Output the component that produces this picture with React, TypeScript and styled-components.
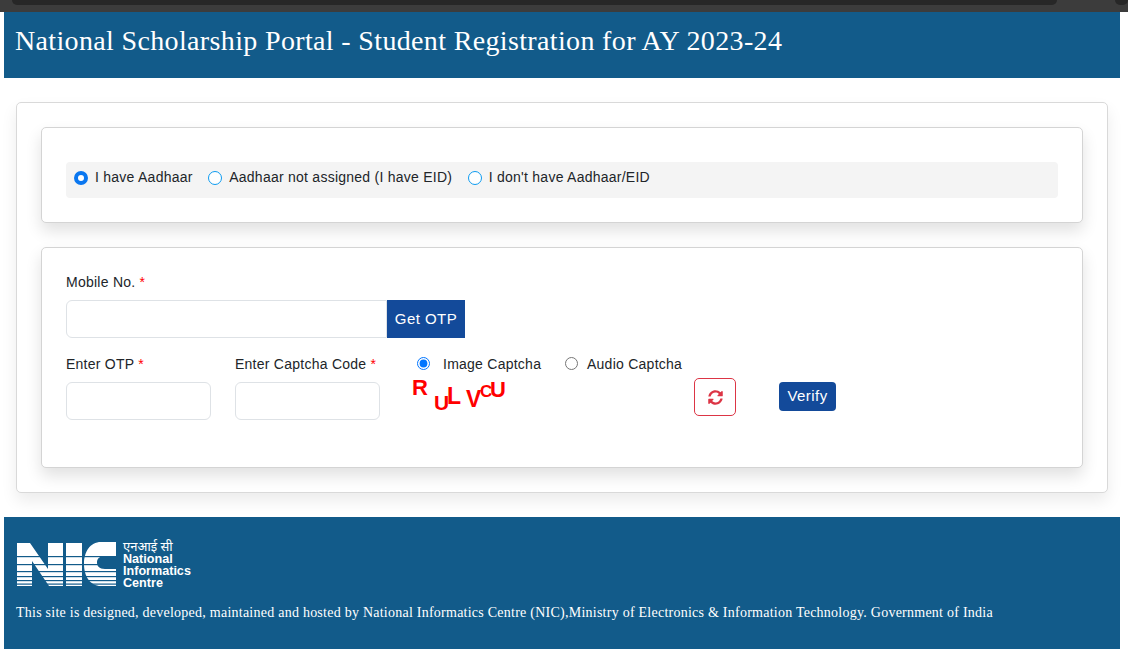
import { createGlobalStyle, styled } from "styled-components";
import { FaSyncAlt } from "react-icons/fa";

const GlobalStyle = createGlobalStyle`
  html, body {
    margin: 0;
    padding: 0;
    background: #fff;
  }
  body {
    font-family: "Liberation Sans", Arial, sans-serif;
    color: #212529;
    overflow: hidden;
  }
`;

const BLUE = "#125b8a";
const BUTTON = "#134a9a";

const Page = styled.div`
  width: 1128px;
  height: 649px;
  display: flex;
  flex-direction: column;
`;

const TopBar = styled.div`
  height: 12px;
  flex-shrink: 0;
  background: #3c3c3c;
  padding-left: 12px;
  display: flex;
  gap: 58px;
`;

const TopBarTab = styled.div<{ $width: number }>`
  width: ${(p) => p.$width}px;
  height: 5px;
  background: #272727;
  border-radius: 0 0 8px 8px;
`;

const Header = styled.header`
  margin: 0 8px 0 4px;
  height: 66px;
  flex-shrink: 0;
  background: ${BLUE};
  display: flex;
  align-items: center;
  padding: 0 0 8px 11px;
  box-sizing: border-box;
`;

const Title = styled.h1`
  margin: 0;
  font-family: "Liberation Serif", "Times New Roman", serif;
  font-weight: 400;
  font-size: 28px;
  letter-spacing: 0.35px;
  color: #fff;
`;

const Panel = styled.main`
  margin: 24px 20px 24px 16px;
  height: 391px;
  flex-shrink: 0;
  box-sizing: border-box;
  padding: 24px;
  background: #fff;
  border: 1px solid #d9d9d9;
  border-radius: 5px;
  box-shadow: 0 8px 16px rgba(0, 0, 0, 0.08);
  display: flex;
  flex-direction: column;
  gap: 24px;
`;

const Card = styled.section<{ $height: number; $top: number }>`
  height: ${(p) => p.$height}px;
  flex-shrink: 0;
  box-sizing: border-box;
  background: #fff;
  border: 1px solid #d4d4d4;
  border-radius: 5px;
  box-shadow: 0 8px 16px rgba(0, 0, 0, 0.12);
  padding: ${(p) => p.$top}px 24px 0 24px;
`;

const ChoiceBar = styled.div`
  height: 36px;
  box-sizing: border-box;
  background: #f4f4f4;
  border-radius: 4px;
  display: flex;
  align-items: center;
  padding: 0 0 6px 8px;
`;

const Choice = styled.label`
  display: flex;
  align-items: center;
  font-size: 14px;
  letter-spacing: 0.25px;
  color: #212529;
  margin-right: 15.5px;
  gap: 7px;
`;

const ChoiceDot = styled.span<{ $on?: boolean }>`
  width: ${(p) => (p.$on ? 6 : 12)}px;
  height: ${(p) => (p.$on ? 6 : 12)}px;
  border-radius: 50%;
  background: #fff;
  border: ${(p) => (p.$on ? "4px solid #0a77f0" : "1px solid #0d9bf0")};
  margin-top: 2px;
`;

const FieldLabel = styled.label`
  display: block;
  font-size: 14px;
  letter-spacing: 0.25px;
  line-height: 16px;
  color: #212529;
`;

const Required = styled.span`
  color: #f00;
`;

const MobileGroup = styled.div`
  display: flex;
  margin-top: 10px;
  width: 399px;
`;

const TextInput = styled.input<{ $joined?: boolean }>`
  box-sizing: border-box;
  height: 38px;
  background: #fff;
  border: 1px solid #dee2e6;
  border-radius: ${(p) => (p.$joined ? "6px 0 0 6px" : "6px")};
  outline: none;
  width: ${(p) => (p.$joined ? "321px" : "145px")};
`;

const OtpButton = styled.button`
  width: 78px;
  height: 38px;
  border: none;
  background: ${BUTTON};
  color: #fff;
  font: 15px "Liberation Sans", Arial, sans-serif;
  letter-spacing: 0.45px;
  padding: 0 0 2px 0;
`;

const FieldRow = styled.div`
  display: flex;
  margin-top: 18px;
`;

const Field = styled.div<{ $width: number }>`
  width: ${(p) => p.$width}px;
  flex-shrink: 0;
  display: flex;
  flex-direction: column;
  gap: 10px;
`;

const CaptchaColumn = styled.div`
  width: 277px;
  flex-shrink: 0;
  margin-left: 12px;
`;

const CaptchaTabs = styled.div`
  display: flex;
  height: 16px;
  align-items: center;
`;

const CaptchaTab = styled.label<{ $width: number; $gap: number }>`
  display: flex;
  align-items: center;
  width: ${(p) => p.$width}px;
  font-size: 14px;
  letter-spacing: 0.25px;
  gap: ${(p) => p.$gap}px;
  color: #212529;
`;

const NativeRadio = styled.input.attrs({ type: "radio" })`
  margin: 0 0 2px 0;
  width: 13px;
  height: 13px;
`;

const CaptchaImage = styled.div`
  position: relative;
  height: 40px;
  margin: 1px 0 0 -5px;
`;

const CaptchaLetter = styled.span<{ $x: number; $y: number; $size: number }>`
  position: absolute;
  left: ${(p) => p.$x}px;
  top: ${(p) => p.$y}px;
  font: 700 ${(p) => p.$size}px/1 "Liberation Sans", Arial, sans-serif;
  color: #f00;
`;

const RefreshButton = styled.button`
  width: 42px;
  height: 38px;
  margin-top: 22px;
  flex-shrink: 0;
  background: #fff;
  border: 1px solid #dc3545;
  border-radius: 5px;
  color: #dc3545;
  display: flex;
  align-items: center;
  justify-content: center;
  padding: 0;
`;

const VerifyButton = styled.button`
  width: 57px;
  height: 29px;
  margin: 26px 0 0 43px;
  flex-shrink: 0;
  background: ${BUTTON};
  border: none;
  border-radius: 4px;
  color: #fff;
  font: 15px "Liberation Sans", Arial, sans-serif;
  letter-spacing: 0.45px;
  padding: 0 0 2px 0;
`;

const Footer = styled.footer`
  margin: 0 8px 0 4px;
  flex: 1;
  background: ${BLUE};
  padding: 25px 0 0 12px;
  color: #fff;
`;

const Logo = styled.div`
  display: flex;
  align-items: flex-start;
  height: 46px;
  margin-left: 1px;
`;

const LogoText = styled.div`
  margin-left: 6px;
  font: 700 12.6px/12px "Liberation Sans", Arial, sans-serif;
  color: #fff;
`;

const LogoHindi = styled.div`
  font-family: "Noto Sans", "Liberation Sans", sans-serif;
  font-weight: 400;
  font-size: 13px;
  line-height: 14px;
  margin: -3px 0 0 0;
`;

const FooterNote = styled.p`
  margin: 17px 0 0 0;
  font-family: "Liberation Serif", "Times New Roman", serif;
  font-size: 14px;
  letter-spacing: 0.245px;
  line-height: 16px;
`;

function NicMark() {
  const gaps = [14, 22, 29, 34, 38, 41.5];
  return (
    <svg width="100" height="45" viewBox="0 0 100 45" aria-hidden="true">
      <defs>
        <mask id="stripes">
          <rect width="100" height="45" fill="#fff" />
          {gaps.map((y) => (
            <rect key={y} y={y} width="100" height="1.2" fill="#000" />
          ))}
        </mask>
      </defs>
      <g fill="#fff" mask="url(#stripes)">
        <path d="M0 1H13L31 27V1H46V44H32L15 19V44H0Z" />
        <rect x="49" y="1" width="16" height="43" />
        <path d="M99 0V14H88C82 14 80 17 80 20.5C80 24 82 27 88 27H99V44H84C73 44 67 34 67 22C67 10 73 0 84 0Z" />
      </g>
    </svg>
  );
}

export default function App() {
  return (
    <Page>
      <GlobalStyle />
      <TopBar>
        <TopBarTab $width={1045} />
        <TopBarTab $width={13} />
      </TopBar>
      <Header>
        <Title>National Scholarship Portal - Student Registration for AY 2023-24</Title>
      </Header>
      <Panel>
        <Card $height={96} $top={34}>
          <ChoiceBar>
            <Choice>
              <ChoiceDot $on />
              I have Aadhaar
            </Choice>
            <Choice>
              <ChoiceDot />
              Aadhaar not assigned (I have EID)
            </Choice>
            <Choice>
              <ChoiceDot />
              I don't have Aadhaar/EID
            </Choice>
          </ChoiceBar>
        </Card>
        <Card $height={221} $top={26}>
          <FieldLabel>
            Mobile No. <Required>*</Required>
          </FieldLabel>
          <MobileGroup>
            <TextInput $joined />
            <OtpButton>Get OTP</OtpButton>
          </MobileGroup>
          <FieldRow>
            <Field $width={169}>
              <FieldLabel>
                Enter OTP <Required>*</Required>
              </FieldLabel>
              <TextInput />
            </Field>
            <Field $width={170}>
              <FieldLabel>
                Enter Captcha Code <Required>*</Required>
              </FieldLabel>
              <TextInput />
            </Field>
            <CaptchaColumn>
              <CaptchaTabs>
                <CaptchaTab $width={148} $gap={13}>
                  <NativeRadio name="captcha" defaultChecked />
                  Image Captcha
                </CaptchaTab>
                <CaptchaTab $width={125} $gap={9}>
                  <NativeRadio name="captcha" />
                  Audio Captcha
                </CaptchaTab>
              </CaptchaTabs>
              <CaptchaImage>
                <CaptchaLetter $x={0} $y={4} $size={22}>R</CaptchaLetter>
                <CaptchaLetter $x={22} $y={19} $size={21}>U</CaptchaLetter>
                <CaptchaLetter $x={35} $y={12} $size={23}>L</CaptchaLetter>
                <CaptchaLetter $x={54} $y={15} $size={23}>V</CaptchaLetter>
                <CaptchaLetter $x={68} $y={10} $size={17}>C</CaptchaLetter>
                <CaptchaLetter $x={78} $y={6} $size={22}>U</CaptchaLetter>
              </CaptchaImage>
            </CaptchaColumn>
            <RefreshButton aria-label="Refresh captcha">
              <FaSyncAlt size={15} />
            </RefreshButton>
            <VerifyButton>Verify</VerifyButton>
          </FieldRow>
        </Card>
      </Panel>
      <Footer>
        <Logo>
          <NicMark />
          <LogoText>
            <LogoHindi>एनआई सी</LogoHindi>
            National
            <br />
            Informatics
            <br />
            Centre
          </LogoText>
        </Logo>
        <FooterNote>
          This site is designed, developed, maintained and hosted by National Informatics Centre (NIC),Ministry of Electronics &amp; Information Technology. Government of India
        </FooterNote>
      </Footer>
    </Page>
  );
}
